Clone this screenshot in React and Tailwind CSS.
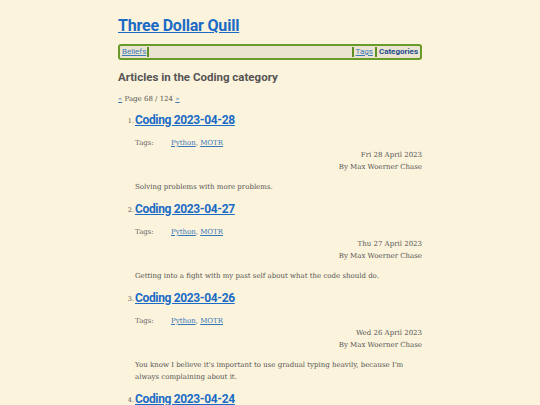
import React from 'react';

const articles = [
  { n: 1, title: 'Coding 2023-04-28', date: 'Fri 28 April 2023', summary: 'Solving problems with more problems.' },
  { n: 2, title: 'Coding 2023-04-27', date: 'Thu 27 April 2023', summary: 'Getting into a fight with my past self about what the code should do.' },
  { n: 3, title: 'Coding 2023-04-26', date: 'Wed 26 April 2023', summary: "You know I believe it's important to use gradual typing heavily, because I'm always complaining about it." },
  { n: 4, title: 'Coding 2023-04-24', date: 'Mon 24 April 2023', summary: 'More of the same.' },
];

const sans = "font-['Roboto','Noto_Sans',sans-serif]";
const serif = "font-['DejaVu_Serif','Liberation_Serif',serif]";

const Article = ({ a }) => (
  <li className="flex">
    <span className={`${serif} text-[6.5px] text-[#555] w-[17px] text-right pr-[1px] pt-[6px] shrink-0`}>{a.n}.</span>
    <div className="flex-1">
      <h3 className={`${sans} text-[12px] tracking-[-0.35px] font-bold leading-[18px]`}>
        <a href="#" className="text-[#1a6bc6] underline">{a.title}</a>
      </h3>
      <div className={`${serif} text-[7px] text-[#666] mt-[8px] leading-[12px] flex`}>
        <span className="w-[36px]">Tags:</span>
        <span>
          <a href="#" className="text-[#3576b8] underline">Python</a>,{' '}
          <a href="#" className="text-[#3576b8] underline">MOTR</a>
        </span>
      </div>
      <div className={`${serif} text-[7px] text-[#555] text-right leading-[12px]`}>
        <div>{a.date}</div>
        <div>By Max Woerner Chase</div>
      </div>
      <p className={`${serif} text-[7px] text-[#555] leading-[12px] mt-[8px] mb-[7px]`}>{a.summary}</p>
    </div>
  </li>
);

export default function App() {
  return (
    <div className="min-h-[405px] bg-[#fcf3dc]">
      <div className="w-[304px] mx-auto pt-[14px]">
        <h1 className={`${sans} text-[16px] tracking-[-0.2px] font-bold leading-[24px]`}>
          <a href="#" className="text-[#1a6bc6] underline">Three Dollar Quill</a>
        </h1>
        <nav className={`${sans} mt-[6px] h-[16px] border-2 border-[#6a9b2a] rounded-[3px] bg-[#ebe4d1] flex items-center px-[2px] text-[8px]`}>
          <a href="#" className="text-[#3d7ab8] underline pr-[1px]">Beliefs</a>
          <span className="w-[2px] h-[10px] bg-[#5f8f22]"></span>
          <span className="flex-1"></span>
          <span className="w-[2px] h-[10px] bg-[#5f8f22]"></span>
          <a href="#" className="text-[#3d7ab8] underline px-[2px]">Tags</a>
          <span className="w-[2px] h-[10px] bg-[#5f8f22]"></span>
          <a href="#" className="text-[#1d4f8c] font-bold pl-[2px]">Categories</a>
        </nav>
        <h2 className={`${sans} text-[11.5px] font-bold text-[#555] mt-[8px] leading-[18px]`}>
          Articles in the Coding category
        </h2>
        <p className={`${serif} text-[7px] text-[#555] mt-[8px]`}>
          <a href="#" className="text-[#3d7ab8] underline">«</a> Page 68 / 124{' '}
          <a href="#" className="text-[#3d7ab8] underline">»</a>
        </p>
        <ol className="mt-[6px]">
          {articles.map(a => <Article key={a.n} a={a} />)}
        </ol>
      </div>
    </div>
  );
}
